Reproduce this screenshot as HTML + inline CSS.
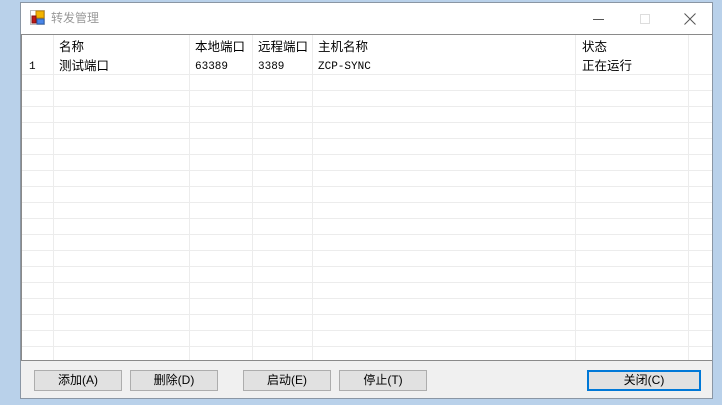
<!DOCTYPE html>
<html><head><meta charset="utf-8"><style>
*{margin:0;padding:0;box-sizing:border-box}
body{width:722px;height:405px;background:#b9d1ea;position:relative;overflow:hidden;font-family:"Liberation Sans","Noto Sans CJK SC",sans-serif;font-size:12px;color:#000}
.win{position:absolute;left:20px;top:2px;width:693px;height:397px;background:#f0f0f0;border:1px solid #8a96a4}
.title{position:absolute;left:0;top:0;width:691px;height:31px;background:#fff}
.title .t{position:absolute;left:30px;top:7px;color:#999;font-size:12px;line-height:16px}
.grid{position:absolute;left:0;top:31px;width:691px;height:327px;background:#fff;border-top:1px solid #8a8a8a;border-bottom:1px solid #8a8a8a;border-left:1px solid #8a8a8a;overflow:hidden}
.vl{position:absolute;top:0;bottom:0;width:1px;background:#ececec}
.hl{position:absolute;left:0;right:0;height:1px;background:#ececec}
.c{position:absolute;white-space:nowrap;line-height:14px}
.btn{position:absolute;top:367px;height:21px;background:#e1e1e1;border:1px solid #adadad;text-align:center;line-height:19px;font-size:12px}
</style></head><body>
<div class="win">
 <div class="title">
  <svg style="position:absolute;left:9px;top:7px" width="15" height="15" viewBox="0 0 15 15">
   <rect x="0.5" y="0.5" width="14" height="14" fill="#fff" stroke="#bbb"/>
   <rect x="6" y="1" width="8" height="7" fill="#f2b400" stroke="#c08000"/>
   <rect x="2" y="6" width="4" height="7" fill="#c01818" stroke="#801010"/>
   <rect x="7" y="9" width="7" height="5" fill="#4a86e8" stroke="#2a5fb0"/>
  </svg>
  <span class="t">转发管理</span>
  <div style="position:absolute;left:572px;top:16px;width:11px;height:1px;background:#555"></div>
  <div style="position:absolute;left:619px;top:11px;width:10px;height:10px;border:1px solid #ddd"></div>
  <svg style="position:absolute;left:663px;top:10px" width="12" height="12"><path d="M0.5 0.5L11.5 11.5M11.5 0.5L0.5 11.5" stroke="#555" stroke-width="1"/></svg>
 </div>
 <div class="grid">
  <div class="vl" style="left:31px"></div><div class="vl" style="left:167px"></div><div class="vl" style="left:230px"></div><div class="vl" style="left:290px"></div><div class="vl" style="left:553px"></div><div class="vl" style="left:666px"></div>
  <div class="hl" style="top:39px"></div><div class="hl" style="top:55px"></div><div class="hl" style="top:71px"></div><div class="hl" style="top:87px"></div><div class="hl" style="top:103px"></div><div class="hl" style="top:119px"></div><div class="hl" style="top:135px"></div><div class="hl" style="top:151px"></div><div class="hl" style="top:167px"></div><div class="hl" style="top:183px"></div><div class="hl" style="top:199px"></div><div class="hl" style="top:215px"></div><div class="hl" style="top:231px"></div><div class="hl" style="top:247px"></div><div class="hl" style="top:263px"></div><div class="hl" style="top:279px"></div><div class="hl" style="top:295px"></div><div class="hl" style="top:311px"></div>
  <div class="c" style="left:37px;top:5px;font-size:12.5px">名称</div>
  <div class="c" style="left:173px;top:5px;font-size:12.5px">本地端口</div>
  <div class="c" style="left:236px;top:5px;font-size:12.5px">远程端口</div>
  <div class="c" style="left:296px;top:5px;font-size:12.5px">主机名称</div>
  <div class="c" style="left:560px;top:5px;font-size:12.5px">状态</div>
  <div class="c" style="left:7px;top:25px;font-family:'Liberation Mono',monospace;font-size:11px">1</div>
  <div class="c" style="left:37px;top:24px;font-size:12.5px">测试端口</div>
  <div class="c" style="left:173px;top:25px;font-family:'Liberation Mono',monospace;font-size:11px">63389</div>
  <div class="c" style="left:236px;top:25px;font-family:'Liberation Mono',monospace;font-size:11px">3389</div>
  <div class="c" style="left:296px;top:25px;font-family:'Liberation Mono',monospace;font-size:11px">ZCP-SYNC</div>
  <div class="c" style="left:560px;top:24px;font-size:12.5px">正在运行</div>
 </div>
 <div class="btn" style="left:13px;width:88px">添加(A)</div>
 <div class="btn" style="left:109px;width:88px">删除(D)</div>
 <div class="btn" style="left:222px;width:88px">启动(E)</div>
 <div class="btn" style="left:318px;width:88px">停止(T)</div>
 <div class="btn" style="left:566px;width:114px;border:2px solid #0078d7;line-height:17px">关闭(C)</div>
</div>
</body></html>
